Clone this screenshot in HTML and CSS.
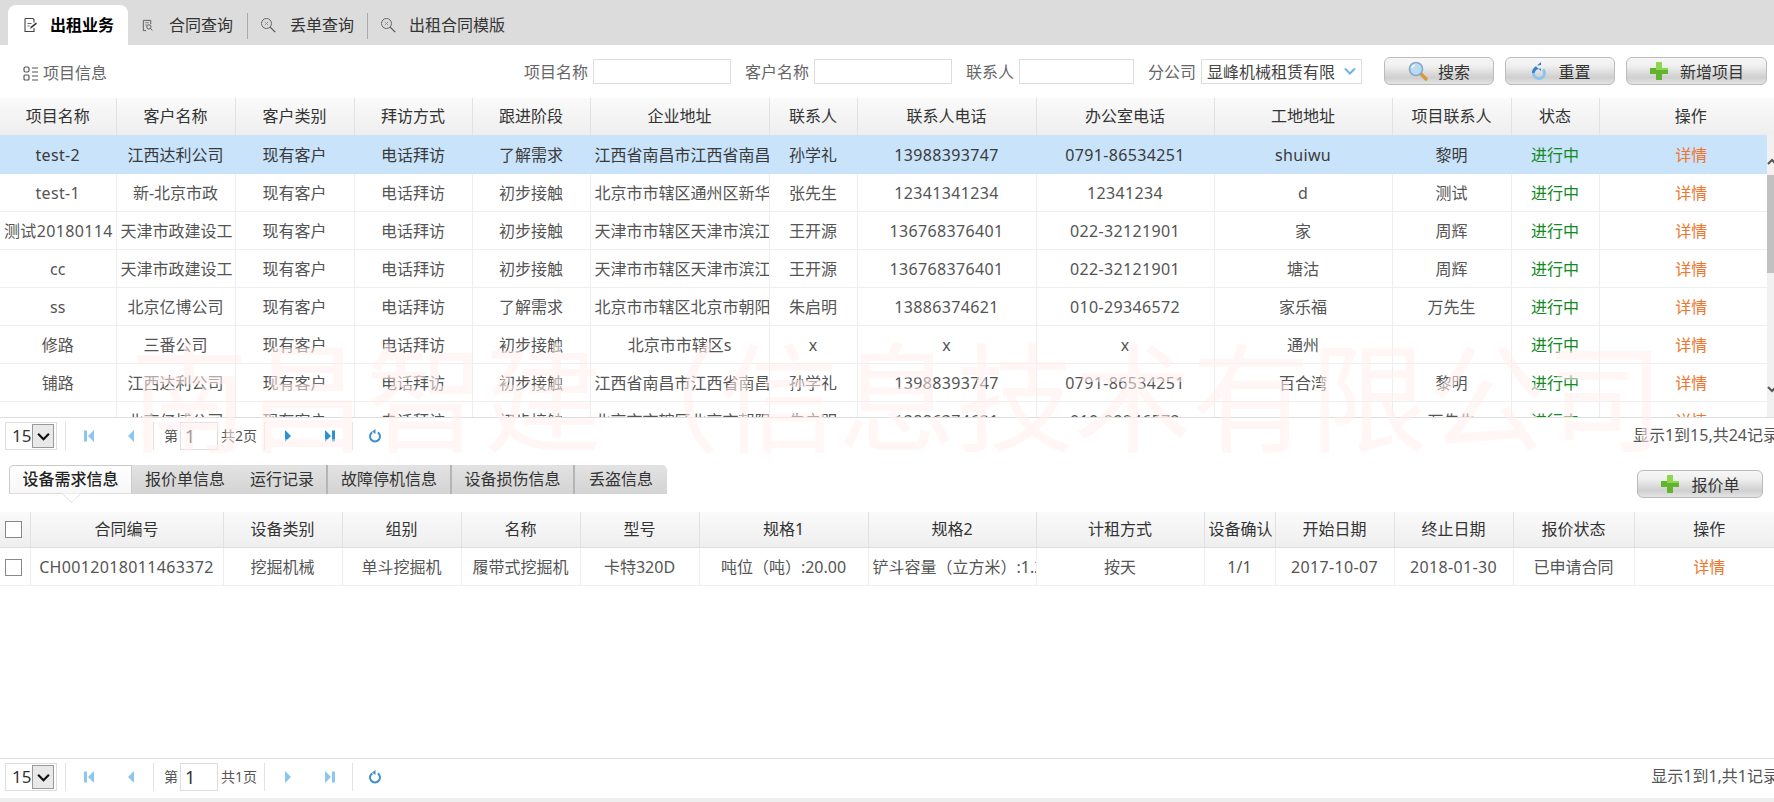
FILE: index.html
```html
<!DOCTYPE html>
<html lang="zh-CN">
<head>
<meta charset="utf-8">
<title>出租业务</title>
<link rel="stylesheet" href="styles.css">
</head>
<body>
<div class="app">
  <nav class="topnav">
    <a class="topnav-tab is-active">
      <svg class="tab-icon" viewBox="0 0 16 16"><path d="M3 1.500h8l1 1v3M12 11v3.500H3V1.500" fill="none" stroke="#444" stroke-width="1.1"/><path d="M5.500 6.500h4M5.500 9h2" stroke="#666"/><path d="M8 12l1-2.500 5-4 1 1.300-5 4z" fill="#333"/></svg>
      <span>出租业务</span>
    </a>
    <a class="topnav-tab tab-contract">
      <svg class="tab-icon-small" viewBox="0 0 14 14"><path d="M2.500 1.500h8v4M2.500 1.500v11h3" fill="none" stroke="#555"/><path d="M4.500 4h4M4.500 6.500h2" stroke="#777"/><circle cx="8.500" cy="8.500" r="2.300" fill="none" stroke="#555"/><path d="M10.200 10.200l2 2" stroke="#555"/></svg>
      <span>合同查询</span>
    </a>
    <i class="topnav-sep"></i>
    <a class="topnav-tab tab-lost">
      <svg class="tab-icon-query" viewBox="0 0 16 16"><circle cx="6.500" cy="6.500" r="5" fill="none" stroke="#666"/><path d="M10.200 10.200l5 5" stroke="#555" stroke-width="1.200"/><path d="M4.800 4.800l3.400 3.400M8.200 4.800L4.800 8.200" stroke="#888" stroke-width=".8"/></svg>
      <span>丢单查询</span>
    </a>
    <i class="topnav-sep"></i>
    <a class="topnav-tab tab-template">
      <svg class="tab-icon-query" viewBox="0 0 16 16"><circle cx="6.500" cy="6.500" r="5" fill="none" stroke="#666"/><path d="M10.200 10.200l5 5" stroke="#555" stroke-width="1.200"/><path d="M4.800 4.800l3.400 3.400M8.200 4.800L4.800 8.200" stroke="#888" stroke-width=".8"/></svg>
      <span>出租合同模版</span>
    </a>
  </nav>

  <header class="toolbar">
    <div class="toolbar-title">
      <svg class="title-icon" viewBox="0 0 15 15"><rect x="1" y="1" width="5" height="5" rx="1.500" fill="none" stroke="#555" stroke-width="1.200"/><rect x="1" y="9" width="5" height="5" rx="1" fill="none" stroke="#555" stroke-width="1.200"/><path d="M9 2h6M9 6h6M9 10h6M9 14h6" stroke="#555" stroke-width="1.200"/></svg>
      <span>项目信息</span>
    </div>
    <form class="filters">
      <label class="filter"><span class="filter-label">项目名称</span><input class="field field-wide" type="text"></label>
      <label class="filter"><span class="filter-label">客户名称</span><input class="field field-wide2" type="text"></label>
      <label class="filter"><span class="filter-label">联系人</span><input class="field field-mid" type="text"></label>
      <label class="filter"><span class="filter-label">分公司</span>
        <span class="combo"><span class="combo-value">显峰机械租赁有限</span>
          <svg class="combo-arrow" viewBox="0 0 12 8"><path d="M1 1.500l5 5 5-5" fill="none" stroke="#6db3e8" stroke-width="2"/></svg>
        </span>
      </label>
      <span class="actions">
        <button class="btn btn-search" type="button">
          <svg class="btn-icon" viewBox="0 0 20 20"><path d="M12 12l6 6" stroke="#d79a3c" stroke-width="3.500" stroke-linecap="round"/><circle cx="8" cy="8" r="6.500" fill="#b9dcf6" stroke="#8aa8c4" stroke-width="1.600"/><path d="M4 7a4 4 0 0 1 3-3" stroke="#fff" stroke-width="1.500" fill="none"/></svg>
          <span>搜索</span>
        </button>
        <button class="btn btn-reset" type="button">
          <svg class="btn-icon" viewBox="0 0 20 20"><path d="M3 12a7 7 0 0 0 14 0c0-2-1-3.500-2-4.500l-2 2c.6.700 1 1.500 1 2.500a4 4 0 0 1-8 0z" fill="#8cc4ef"/><path d="M12 1L7 5.500 12 10V7.500c-3.500 0-6 2-6.500 4.500H3c0-4.500 4-8 9-8z" fill="#2f7fcf"/></svg>
          <span>重置</span>
        </button>
        <button class="btn btn-add" type="button">
          <svg class="btn-icon" viewBox="0 0 20 20"><path d="M7 1h6v6h6v6h-6v6H7v-6H1V7h6z" fill="#62b32e"/><path d="M7 1h6v6h6v2H7z" fill="#8fd650"/></svg>
          <span>新增项目</span>
        </button>
      </span>
    </form>
  </header>

  <table class="grid grid-top grid-head">
    <colgroup><col><col><col><col><col><col><col><col><col><col><col><col><col></colgroup>
    <thead><tr><th>项目名称</th><th>客户名称</th><th>客户类别</th><th>拜访方式</th><th>跟进阶段</th><th>企业地址</th><th>联系人</th><th>联系人电话</th><th>办公室电话</th><th>工地地址</th><th>项目联系人</th><th>状态</th><th>操作</th></tr></thead>
  </table>
  <div class="grid-scroll">
    <table class="grid grid-top grid-body">
      <colgroup><col><col><col><col><col><col><col><col><col><col><col><col><col></colgroup>
      <tbody>
        <tr class="is-selected"><td class="num">test-2</td><td>江西达利公司</td><td>现有客户</td><td>电话拜访</td><td>了解需求</td><td>江西省南昌市江西省南昌市</td><td>孙学礼</td><td class="num">13988393747</td><td class="num">0791-86534251</td><td class="num">shuiwu</td><td>黎明</td><td class="st">进行中</td><td class="op">详情</td></tr>
        <tr><td class="num">test-1</td><td>新-北京市政</td><td>现有客户</td><td>电话拜访</td><td>初步接触</td><td>北京市市辖区通州区新华西街</td><td>张先生</td><td class="num">12341341234</td><td class="num">12341234</td><td>d</td><td>测试</td><td class="st">进行中</td><td class="op">详情</td></tr>
        <tr><td class="num">测试20180114</td><td>天津市政建设工</td><td>现有客户</td><td>电话拜访</td><td>初步接触</td><td>天津市市辖区天津市滨江道</td><td>王开源</td><td class="num">136768376401</td><td class="num">022-32121901</td><td>家</td><td>周辉</td><td class="st">进行中</td><td class="op">详情</td></tr>
        <tr><td>cc</td><td>天津市政建设工</td><td>现有客户</td><td>电话拜访</td><td>初步接触</td><td>天津市市辖区天津市滨江道</td><td>王开源</td><td class="num">136768376401</td><td class="num">022-32121901</td><td>塘沽</td><td>周辉</td><td class="st">进行中</td><td class="op">详情</td></tr>
        <tr><td>ss</td><td>北京亿博公司</td><td>现有客户</td><td>电话拜访</td><td>了解需求</td><td>北京市市辖区北京市朝阳区</td><td>朱启明</td><td class="num">13886374621</td><td class="num">010-29346572</td><td>家乐福</td><td>万先生</td><td class="st">进行中</td><td class="op">详情</td></tr>
        <tr><td>修路</td><td>三番公司</td><td>现有客户</td><td>电话拜访</td><td>初步接触</td><td>北京市市辖区s</td><td>x</td><td>x</td><td>x</td><td>通州</td><td></td><td class="st">进行中</td><td class="op">详情</td></tr>
        <tr><td>铺路</td><td>江西达利公司</td><td>现有客户</td><td>电话拜访</td><td>初步接触</td><td>江西省南昌市江西省南昌市</td><td>孙学礼</td><td class="num">13988393747</td><td class="num">0791-86534251</td><td>百合湾</td><td>黎明</td><td class="st">进行中</td><td class="op">详情</td></tr>
        <tr><td></td><td>北京亿博公司</td><td>现有客户</td><td>电话拜访</td><td>初步接触</td><td>北京市市辖区北京市朝阳区</td><td>朱启明</td><td class="num">13886374621</td><td class="num">010-29346572</td><td></td><td>万先生</td><td class="st">进行中</td><td class="op">详情</td></tr>
      </tbody>
    </table>
    <div class="scrollbar">
      <svg class="sb-arrow" viewBox="0 0 7 8"><path d="M1 6l4-4 4 4" fill="none" stroke="#555" stroke-width="2"/></svg>
      <div class="sb-thumb"></div>
      <svg class="sb-arrow sb-arrow-down" viewBox="0 0 7 8"><path d="M1 2l4 4 4-4" fill="none" stroke="#555" stroke-width="2"/></svg>
    </div>
  </div>

  <footer class="pager pager-top">
    <div class="page-size"><span class="page-size-val">15</span><span class="page-size-btn"><svg viewBox="0 0 12 8"><path d="M1 1.500l5 5 5-5" fill="none" stroke="#111" stroke-width="2"/></svg></span></div>
    <i class="pager-sep"></i>
    <span class="pg-nav">
      <svg class="pg-icon" viewBox="0 0 12 14"><rect x="1" y="1.500" width="3" height="11" fill="#8cc6ee"/><path d="M11 1v12L5 7z" fill="#8cc6ee"/></svg>
      <svg class="pg-icon" viewBox="0 0 12 14"><path d="M9 1v12L3 7z" fill="#8cc6ee"/></svg>
    </span>
    <i class="pager-sep"></i>
    <span class="pg-label">第</span><input class="pg-input" type="text" value="1"><span class="pg-total">共2页</span>
    <i class="pager-sep"></i>
    <span class="pg-nav">
      <svg class="pg-icon" viewBox="0 0 12 14"><path d="M3 1v12L9 7z" fill="#2d8fd5"/></svg>
      <svg class="pg-icon" viewBox="0 0 12 14"><path d="M1 1v12L7 7z" fill="#2d8fd5"/><rect x="8" y="1.500" width="3" height="11" fill="#2d8fd5"/></svg>
    </span>
    <i class="pager-sep"></i>
    <svg class="pg-refresh" viewBox="0 0 14 14"><path d="M4.200 3.300a5 5 0 1 0 5.600 0" fill="none" stroke="#3d90d0" stroke-width="2"/><path d="M7.500 0v5L4 2.500z" fill="#3d90d0"/></svg>
    <span class="pg-summary">显示1到15,共24记录</span>
  </footer>

  <section class="detail-head">
    <div class="subtabs">
      <a class="subtab subtab-1 is-active">设备需求信息</a>
      <a class="subtab subtab-2">报价单信息</a>
      <a class="subtab subtab-3">运行记录</a>
      <a class="subtab subtab-4">故障停机信息</a>
      <a class="subtab subtab-5">设备损伤信息</a>
      <a class="subtab subtab-6">丢盗信息</a>
    </div>
    <button class="btn btn-quote" type="button">
      <svg class="btn-icon" viewBox="0 0 20 20"><path d="M7 1h6v6h6v6h-6v6H7v-6H1V7h6z" fill="#62b32e"/><path d="M7 1h6v6h6v2H7z" fill="#8fd650"/></svg>
      <span>报价单</span>
    </button>
  </section>

  <table class="grid grid-detail">
    <colgroup><col><col><col><col><col><col><col><col><col><col><col><col><col><col></colgroup>
    <thead><tr><th><input class="check" type="checkbox"></th><th>合同编号</th><th>设备类别</th><th>组别</th><th>名称</th><th>型号</th><th>规格1</th><th>规格2</th><th>计租方式</th><th>设备确认</th><th>开始日期</th><th>终止日期</th><th>报价状态</th><th>操作</th></tr></thead>
    <tbody><tr><td><input class="check" type="checkbox"></td><td class="num">CH0012018011463372</td><td>挖掘机械</td><td>单斗挖掘机</td><td>履带式挖掘机</td><td>卡特320D</td><td>吨位（吨）:20.00</td><td>铲斗容量（立方米）:1.2</td><td>按天</td><td>1/1</td><td class="num">2017-10-07</td><td class="num">2018-01-30</td><td>已申请合同</td><td class="op">详情</td></tr></tbody>
  </table>

  <div class="filler"></div>

  <footer class="pager pager-bottom">
    <div class="page-size"><span class="page-size-val">15</span><span class="page-size-btn"><svg viewBox="0 0 12 8"><path d="M1 1.500l5 5 5-5" fill="none" stroke="#111" stroke-width="2"/></svg></span></div>
    <i class="pager-sep"></i>
    <span class="pg-nav">
      <svg class="pg-icon" viewBox="0 0 12 14"><rect x="1" y="1.500" width="3" height="11" fill="#8cc6ee"/><path d="M11 1v12L5 7z" fill="#8cc6ee"/></svg>
      <svg class="pg-icon" viewBox="0 0 12 14"><path d="M9 1v12L3 7z" fill="#8cc6ee"/></svg>
    </span>
    <i class="pager-sep"></i>
    <span class="pg-label">第</span><input class="pg-input" type="text" value="1"><span class="pg-total">共1页</span>
    <i class="pager-sep"></i>
    <span class="pg-nav">
      <svg class="pg-icon" viewBox="0 0 12 14"><path d="M3 1v12L9 7z" fill="#8cc6ee"/></svg>
      <svg class="pg-icon" viewBox="0 0 12 14"><path d="M1 1v12L7 7z" fill="#8cc6ee"/><rect x="8" y="1.500" width="3" height="11" fill="#8cc6ee"/></svg>
    </span>
    <i class="pager-sep"></i>
    <svg class="pg-refresh" viewBox="0 0 14 14"><path d="M4.200 3.300a5 5 0 1 0 5.600 0" fill="none" stroke="#3d90d0" stroke-width="2"/><path d="M7.500 0v5L4 2.500z" fill="#3d90d0"/></svg>
    <span class="pg-summary">显示1到1,共1记录</span>
  </footer>
  <div class="page-end"></div>

  <div class="watermark" aria-hidden="true">南昌智建（信息技术有限公司</div>
</div>
</body>
</html>
```

FILE: styles.css
```css
* { box-sizing: border-box; }
html, body { margin: 0; padding: 0; }
body {
  width: 1774px;
  height: 802px;
  overflow: hidden;
  background: #fff;
  color: #555;
  font: 16px/1.2 "Noto Sans", "Open Sans", "Noto Sans CJK SC", sans-serif;
}
.app {
  position: relative;
  display: flex;
  flex-direction: column;
  width: 1774px;
  height: 802px;
  overflow: hidden;
}

/* top navigation */
.topnav {
  display: flex;
  flex: none;
  align-items: flex-end;
  height: 45px;
  padding-left: 8px;
  background: #dcdcdc;
  color: #333;
}
.topnav-tab { display: flex; align-items: center; height: 40px; }
.topnav-tab span { padding-top: 2px; }
.topnav-tab.is-active {
  width: 120px;
  padding-left: 14px;
  gap: 12px;
  border-radius: 8px 8px 0 0;
  background: #fff;
  color: #000;
  font-weight: 700;
}
.tab-icon { width: 16px; height: 16px; flex: none; }
.tab-icon-small { width: 13px; height: 13px; flex: none; }
.tab-icon-query { width: 16px; height: 16px; flex: none; }
.tab-contract { width: 119px; padding-left: 13px; gap: 15px; }
.tab-lost { width: 119px; padding-left: 12px; gap: 14px; }
.tab-template { padding-left: 12px; gap: 13px; }
.topnav-sep { width: 1px; height: 26px; margin-bottom: 6px; background: #aaa; }

/* toolbar */
.toolbar {
  display: flex;
  flex: none;
  align-items: center;
  height: 53px;
  padding: 0 7px 1px 23px;
}
.toolbar-title { display: flex; align-items: center; gap: 5px; padding-top: 5px; color: #666; }
.title-icon { width: 15px; height: 15px; }
.filters { display: flex; align-items: center; margin-left: auto; }
.filter { display: flex; align-items: center; gap: 5px; margin-right: 14px; color: #666; }
.filter-label { padding-top: 3px; }
.field { height: 25px; padding: 0 4px; border: 1px solid #ddd; background: #fff; }
.field-wide { width: 138px; }
.field-wide2 { width: 138px; }
.field-mid { width: 115px; }
.combo {
  display: flex;
  align-items: center;
  width: 161px;
  height: 25px;
  padding: 0 5px;
  border: 1px solid #ddd;
  color: #444;
}
.combo-value { width: 131px; padding-top: 3px; white-space: nowrap; overflow: hidden; }
.combo-arrow { width: 12px; height: 8px; margin-left: 7px; }
.actions { display: flex; gap: 11px; margin-left: 8px; }
.btn {
  display: flex;
  align-items: center;
  justify-content: center;
  height: 28px;
  padding: 0;
  border: 1px solid #bbb;
  border-radius: 6px;
  background: linear-gradient(#f6f6f6, #f0f0f0 30%, #cfcfcf 75%, #e4e4e4);
  color: #333;
  font: inherit;
}
.btn span { padding-top: 3px; }
.btn-search { width: 110px; gap: 10px; }
.btn-reset { width: 110px; gap: 9px; }
.btn-add { width: 141px; gap: 11px; }
.btn-icon { width: 20px; height: 20px; }

/* grids */
.grid {
  flex: none;
  table-layout: fixed;
  border-collapse: collapse;
  border-spacing: 0;
}
.grid th, .grid td {
  overflow: hidden;
  padding: 0 4px;
  border-right: 1px solid #eee;
  text-align: center;
  white-space: nowrap;
  font-weight: 400;
}
.grid th {
  height: 37px;
  background: linear-gradient(#fafafa, #eeeeee);
  border-right-color: #e2e2e2;
  color: #333;
}
.grid td { height: 38px; padding-top: 3px; border-bottom: 1px solid #eee; color: #555; }
.grid th:last-child, .grid td:last-child { border-right: 0; }
.grid .num { letter-spacing: .35px; }
.grid .st { color: #118a1e; }
.grid .op { color: #f0742c; }
.grid .is-selected td { background: #c9e3fb; border-bottom-color: #c9e3fb; border-right-color: #c9e3fb; color: #3a3a3a; }
.grid .is-selected .st { color: #118a1e; }
.grid .is-selected .op { color: #f0742c; }

.grid-head { width: 1774px; }
.grid-body { width: 1767px; }
.grid-top col:nth-child(1) { width: 116px; }
.grid-top col:nth-child(2) { width: 119px; }
.grid-top col:nth-child(3) { width: 119px; }
.grid-top col:nth-child(4) { width: 118px; }
.grid-top col:nth-child(5) { width: 118px; }
.grid-top col:nth-child(6) { width: 179px; }
.grid-top col:nth-child(7) { width: 88px; }
.grid-top col:nth-child(8) { width: 179px; }
.grid-top col:nth-child(9) { width: 178px; }
.grid-top col:nth-child(10) { width: 178px; }
.grid-top col:nth-child(11) { width: 119px; }
.grid-top col:nth-child(12) { width: 88px; }
.grid-head col:nth-child(13) { width: 175px; }
.grid-body col:nth-child(13) { width: 168px; }
.grid-head th:last-child { padding-left: 12px; }
.grid-body td:last-child { padding-left: 20px; }

.grid-scroll { display: flex; flex: none; height: 283px; overflow: hidden; border-bottom: 1px solid #ddd; }
.grid-scroll .grid-body { align-self: flex-start; }
.scrollbar { display: flex; flex: none; flex-direction: column; width: 7px; background: #f1f1f1; }
.sb-arrow { width: 7px; height: 8px; margin-top: 23px; }
.sb-arrow-down { margin-top: 112px; }
.sb-thumb { height: 98px; margin-top: 9px; background: #c1c1c1; }

/* pagers */
.pager { display: flex; flex: none; align-items: center; padding-left: 5px; padding-bottom: 3px; color: #555; font-size: 14px; }
.pager-top { height: 39px; }
.pager-bottom { border-top: 1px solid #ddd; height: 40px; }
.page-size {
  display: flex;
  align-items: center;
  justify-content: space-between;
  width: 52px;
  height: 28px;
  padding: 0 2px 0 6px;
  border: 1px solid #ddd;
  color: #333;
  font-size: 17px;
}
.page-size-btn {
  display: flex;
  align-items: center;
  justify-content: center;
  width: 22px;
  height: 24px;
  border: 1px solid #999;
  background: #e9e9e9;
}
.page-size-btn svg { width: 13px; height: 9px; }
.pager-sep { flex: none; width: 1px; height: 28px; background: #e3e3e3; }
.page-size + .pager-sep { margin-left: 8px; }
.pg-nav { display: flex; justify-content: space-between; align-items: center; width: 87px; padding: 0 16px 0 17px; }
.pg-icon { width: 12px; height: 14px; }
.pg-label { margin-left: 10px; }
.pg-input {
  width: 38px;
  height: 28px;
  margin: 0 3px 0 2px;
  padding: 0 0 0 4px;
  border: 1px solid #ddd;
  background: transparent;
  color: #333;
  font: inherit;
  font-size: 18px;
}
.pg-total { width: 43px; white-space: nowrap; }
.pg-refresh { width: 14px; height: 14px; margin-left: 15px; }
.pg-summary { margin-left: auto; margin-right: -5px; font-size: 16px; white-space: nowrap; }

/* detail */
.detail-head { display: flex; flex: none; align-items: flex-start; justify-content: space-between; height: 55px; padding: 8px 11px 0 9px; }
.subtabs { display: flex; height: 29px; border-radius: 5px 5px 0 0; background: linear-gradient(#e2e2e2, #d4d4d4); }
.subtab {
  display: flex;
  align-items: center;
  justify-content: center;
  border-right: 2px solid #b5b5b5;
  color: #333;
}
.subtab-1 { width: 123px; }
.subtab-2 { width: 106px; }
.subtab-3 { width: 90px; }
.subtab-4 { width: 124px; }
.subtab-5 { width: 123px; }
.subtab-6 { width: 92px; border-right: 0; }
.subtab-1, .subtab-2 { border-right: 0; }
.subtab.is-active {
  position: relative;
  border: 1px solid #ccc;
  border-bottom-color: #ddd;
  border-radius: 5px 0 0 0;
  background: linear-gradient(#fff, #f7f7f7);
  color: #222;
  font-weight: 500;
}
.subtab.is-active::after {
  content: "";
  position: absolute;
  left: 50%;
  bottom: -8px;
  width: 14px;
  height: 14px;
  margin-left: -7px;
  transform: rotate(45deg) scale(.95);
  border-right: 1px solid #ddd;
  border-bottom: 1px solid #ddd;
  background: #fff;
  clip-path: polygon(100% 0, 100% 100%, 0 100%);
}
.btn-quote { width: 126px; gap: 11px; margin-top: 5px; }

.grid-detail { width: 1774px; }
.grid-detail th { height: 35px; border-bottom: 1px solid #ddd; }
.grid-detail td { height: 38px; }
.grid-detail th:last-child, .grid-detail td:last-child { padding-left: 14px; }
.grid-detail col:nth-child(1) { width: 30px; }
.grid-detail col:nth-child(2) { width: 193px; }
.grid-detail col:nth-child(3) { width: 119px; }
.grid-detail col:nth-child(4) { width: 119px; }
.grid-detail col:nth-child(5) { width: 119px; }
.grid-detail col:nth-child(6) { width: 119px; }
.grid-detail col:nth-child(7) { width: 169px; }
.grid-detail col:nth-child(8) { width: 168px; }
.grid-detail col:nth-child(9) { width: 168px; }
.grid-detail col:nth-child(10) { width: 71px; }
.grid-detail col:nth-child(11) { width: 119px; }
.grid-detail col:nth-child(12) { width: 119px; }
.grid-detail col:nth-child(13) { width: 121px; }
.grid-detail col:nth-child(14) { width: 140px; }
.check {
  display: block;
  width: 17px;
  height: 17px;
  margin: 0 0 0 1px;
  appearance: none;
  border: 1px solid #888;
  background: #fff;
}

.filler { flex: 1; }
.page-end { flex: none; height: 4px; background: #eee; }

.watermark {
  position: absolute;
  left: 130px;
  top: 333px;
  color: rgba(255, 238, 236, .55);
  font-size: 118px;
  line-height: 130px;
  white-space: nowrap;
  pointer-events: none;
}
```
